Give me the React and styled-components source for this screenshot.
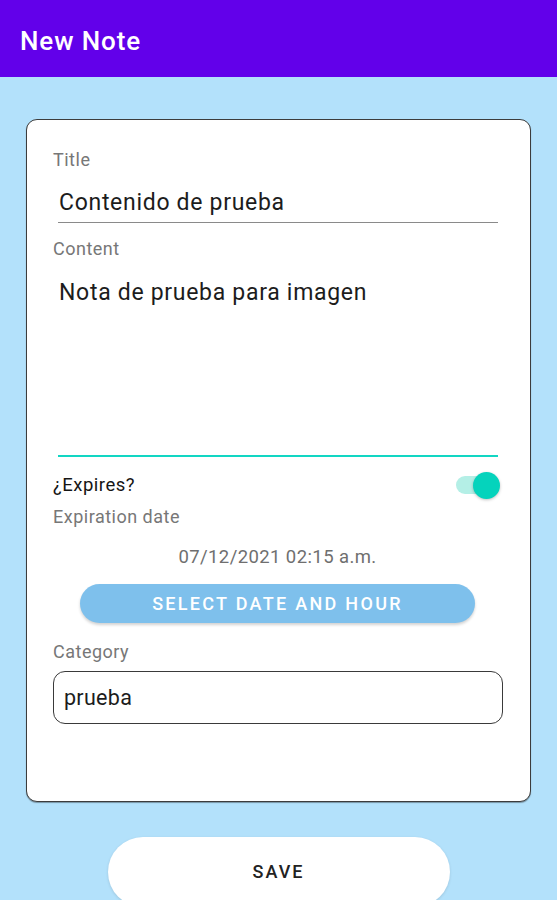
import React from 'react'
import styled, { createGlobalStyle } from 'styled-components'

const GlobalStyle = createGlobalStyle`
    html, body {
        margin: 0;
        padding: 0;
        background: #b3e1fb;
        overflow: hidden;
    }
    body {
        font-family: Roboto, 'Liberation Sans', sans-serif;
    }
`

const StyledScreen = styled.div`
    display: flex;
    flex-direction: column;
    width: 557px;
    min-height: 900px;
    background-color: #b3e1fb;
`

const StyledAppBar = styled.header`
    display: flex;
    align-items: center;
    flex-shrink: 0;
    height: 77px;
    padding: 4px 20px 0;
    box-sizing: border-box;
    background-color: #6200ea;
    color: #ffffff;
    font-size: 26px;
    font-weight: 500;
    letter-spacing: 0.9px;
`

const StyledBody = styled.main`
    display: flex;
    flex-direction: column;
    align-items: center;
    padding: 42px 26px 0;
`

const StyledCard = styled.section`
    display: flex;
    flex-direction: column;
    flex-shrink: 0;
    box-sizing: border-box;
    width: 505px;
    height: 683px;
    padding: 30px 28px 0 26px;
    background-color: #ffffff;
    border: 1.5px solid #3c3c3c;
    border-radius: 11px;
    box-shadow: 0 1px 1px rgba(0, 0, 0, 0.35);
`

const StyledLabel = styled.label`
    display: block;
    height: 20px;
    line-height: 20px;
    font-size: ${({ dark }) => (dark ? 18.5 : 18)}px;
    letter-spacing: 0.5px;
    color: ${({ dark }) => (dark ? '#151515' : '#777777')};
    margin-top: ${({ top }) => top || 0}px;
`

const StyledField = styled.div`
    display: flex;
    align-items: flex-start;
    margin: ${({ top }) => top}px 4px 0 5px;
    height: ${({ h }) => h}px;
    padding: ${({ pt }) => pt}px 1px 0;
    box-sizing: border-box;
    border-bottom: ${({ focused }) =>
        focused ? '2.5px solid #12d6c3' : '1.2px solid #8a8a8a'};
    font-size: 23px;
    letter-spacing: 0.7px;
    line-height: 24px;
    color: #1c1c1c;
`

const StyledRow = styled.div`
    display: flex;
    align-items: center;
    justify-content: space-between;
    height: 28px;
    margin-top: 14px;
`

const StyledSwitch = styled.div`
    position: relative;
    width: 44px;
    height: 28px;
    margin-right: 2px;
`

const StyledTrack = styled.div`
    position: absolute;
    left: 0;
    top: 5px;
    width: 40px;
    height: 18px;
    border-radius: 9px;
    background-color: #b4efe6;
`

const StyledThumb = styled.div`
    position: absolute;
    right: 0;
    top: 1px;
    width: 27px;
    height: 27px;
    border-radius: 50%;
    background-color: #05d3bc;
    box-shadow: 0 1px 3px rgba(0, 0, 0, 0.25);
`

const StyledDate = styled.div`
    text-align: center;
    height: 22px;
    line-height: 22px;
    margin-top: 19px;
    font-size: 18.5px;
    letter-spacing: 0.4px;
    color: #6f6f6f;
`

const StyledPickButton = styled.button`
    align-self: center;
    width: 395px;
    height: 39px;
    margin-top: 16px;
    border: 0;
    border-radius: 20px;
    background-color: #7ec0ec;
    color: #ffffff;
    font-family: Roboto, 'Liberation Sans', sans-serif;
    font-size: 18px;
    font-weight: 500;
    letter-spacing: 2.3px;
    box-shadow: 0 2px 3px rgba(0, 0, 0, 0.18);
`

const StyledBox = styled.div`
    display: flex;
    align-items: center;
    height: 53px;
    margin-top: 9px;
    margin-right: -1px;
    padding: 0 10px;
    box-sizing: border-box;
    border: 1.5px solid #3a3a3a;
    border-radius: 12px;
    font-size: 21.5px;
    letter-spacing: 0.3px;
    color: #1c1c1c;
`

const StyledSave = styled.button`
    flex-shrink: 0;
    width: 342px;
    height: 70px;
    margin-top: 35px;
    border: 0;
    border-radius: 35px;
    background-color: #ffffff;
    color: #222222;
    font-family: Roboto, 'Liberation Sans', sans-serif;
    font-size: 18px;
    font-weight: 500;
    letter-spacing: 2px;
    padding-bottom: 2px;
    box-shadow: 0 1px 3px rgba(0, 0, 0, 0.12);
`

export default function App() {
    return (
        <StyledScreen>
            <GlobalStyle />
            <StyledAppBar>New Note</StyledAppBar>
            <StyledBody>
                <StyledCard>
                    <StyledLabel>Title</StyledLabel>
                    <StyledField top={11} h={42} pt={10}>
                        Contenido de prueba
                    </StyledField>
                    <StyledLabel top={16}>Content</StyledLabel>
                    <StyledField top={10} h={188} pt={12} focused>
                        Nota de prueba para imagen
                    </StyledField>
                    <StyledRow>
                        <StyledLabel dark>¿Expires?</StyledLabel>
                        <StyledSwitch>
                            <StyledTrack />
                            <StyledThumb />
                        </StyledSwitch>
                    </StyledRow>
                    <StyledLabel top={8}>Expiration date</StyledLabel>
                    <StyledDate>07/12/2021 02:15 a.m.</StyledDate>
                    <StyledPickButton>SELECT DATE AND HOUR</StyledPickButton>
                    <StyledLabel top={19}>Category</StyledLabel>
                    <StyledBox>prueba</StyledBox>
                </StyledCard>
                <StyledSave>SAVE</StyledSave>
            </StyledBody>
        </StyledScreen>
    )
}
